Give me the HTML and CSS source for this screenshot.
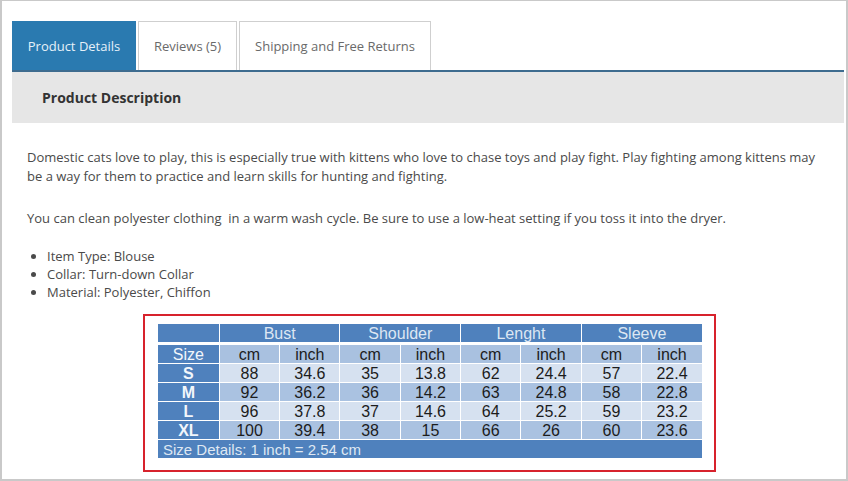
FILE: index.html
```html
<!DOCTYPE html>
<html>
<head>
<meta charset="utf-8">
<link rel="stylesheet" href="styles.css">
</head>
<body>
<div class="frame">
  <div class="tabs">
    <div class="tab active">Product Details</div>
    <div class="tab">Reviews (5)</div>
    <div class="tab">Shipping and Free Returns</div>
  </div>
  <div class="panel-head">Product Description</div>
  <div class="content">
    <p>Domestic cats love to play, this is especially true with kittens who love to chase toys and play fight. Play fighting among kittens may be a way for them to practice and learn skills for hunting and fighting.</p>
    <p class="p2">You can clean polyester clothing&nbsp; in a warm wash cycle. Be sure to use a low-heat setting if you toss it into the dryer.</p>
    <ul>
      <li>Item Type: Blouse</li>
      <li>Collar: Turn-down Collar</li>
      <li>Material: Polyester, Chiffon</li>
    </ul>
    <div class="chart-wrap">
      <div class="chart">
        <table class="size">
          <colgroup>
            <col class="c0"><col><col><col><col><col><col><col><col>
          </colgroup>
          <tr class="h1">
            <td></td><td colspan="2">Bust</td><td colspan="2">Shoulder</td><td colspan="2">Lenght</td><td colspan="2">Sleeve</td>
          </tr>
          <tr class="h2">
            <td class="lab">Size</td><td>cm</td><td>inch</td><td>cm</td><td>inch</td><td>cm</td><td>inch</td><td>cm</td><td>inch</td>
          </tr>
          <tr class="lt">
            <td class="lab b">S</td><td>88</td><td>34.6</td><td>35</td><td>13.8</td><td>62</td><td>24.4</td><td>57</td><td>22.4</td>
          </tr>
          <tr class="md">
            <td class="lab b">M</td><td>92</td><td>36.2</td><td>36</td><td>14.2</td><td>63</td><td>24.8</td><td>58</td><td>22.8</td>
          </tr>
          <tr class="lt">
            <td class="lab b">L</td><td>96</td><td>37.8</td><td>37</td><td>14.6</td><td>64</td><td>25.2</td><td>59</td><td>23.2</td>
          </tr>
          <tr class="md">
            <td class="lab b">XL</td><td>100</td><td>39.4</td><td>38</td><td>15</td><td>66</td><td>26</td><td>60</td><td>23.6</td>
          </tr>
          <tr class="foot">
            <td colspan="9">Size Details: 1 inch = 2.54 cm</td>
          </tr>
        </table>
      </div>
    </div>
  </div>
</div>
</body>
</html>
```

FILE: styles.css
```css
* { box-sizing: border-box; }
html, body { margin: 0; padding: 0; background: #fff; }
body { font-family: "Open Sans", "Liberation Sans", sans-serif; }

.frame {
  width: 848px;
  height: 481px;
  border: 2px solid #c9c9c9;
  border-top-width: 1px;
  padding: 20px 2px 0 10px;
  overflow: hidden;
}

.tabs {
  display: flex;
  gap: 2px;
  height: 51px;
  border-bottom: 2px solid #3e6c8f;
}
.tab {
  display: flex;
  align-items: center;
  justify-content: center;
  height: 49px;
  border: 1px solid #cfcfcf;
  border-bottom: none;
  background: #fff;
  color: #6a6a6a;
  font-size: 13px;
}
.tab:nth-child(2) { width: 99px; }
.tab:nth-child(3) { width: 192px; }
.tab.active {
  width: 124px;
  background: #2a7ab0;
  border-color: #2a7ab0;
  color: #e6f1f9;
}

.panel-head {
  height: 51px;
  background: #e6e6e6;
  padding-left: 30px;
  display: flex;
  align-items: center;
  font-weight: 700;
  font-size: 14px;
  color: #333;
}

.content {
  padding: 25px 15px 0 15px;
  color: #4a4a4a;
  font-size: 13px;
  line-height: 19px;
}
.content p { margin: 0; }
.content .p2 { margin-top: 23px; }
.content ul {
  margin: 19px 0 0 0;
  padding-left: 20px;
  line-height: 18px;
}

.chart-wrap {
  display: flex;
  justify-content: center;
  margin-top: 13px;
}
.chart {
  width: 573px;
  border: 2px solid #d7222c;
  padding: 8px 13px 11px 13px;
  margin-left: 3px;
}

table.size {
  width: 544px;
  table-layout: fixed;
  border-collapse: collapse;
  font-family: "Liberation Sans", Arial, sans-serif;
  font-size: 16px;
  color: #1c1c1c;
}
table.size col { width: 60px; }
table.size col.c0 { width: 61px; }
table.size td {
  box-sizing: content-box;
  padding: 0;
  text-align: center;
  border: 1px solid #fff;
  height: 18px;
  line-height: 17px;
}
table.size tr:first-child td { border-top: none; }
table.size td:first-child { border-left: none; }
table.size td:last-child { border-right: none; }

.h1 td {
  background: #4f81bd;
  color: #dde7f3;
  height: 20px;
  border-bottom: 3px solid #fff !important;
}
.h2 td { background: #a9c1e0; height: 19px; }
.lt td { background: #d6e1f0; }
.md td { background: #aac2e1; }
td.lab { background: #4f81bd !important; color: #f2f6fb; }
td.b { font-weight: 700; }
.foot td {
  background: #4f81bd;
  color: #dfe8f3;
  text-align: left !important;
  padding-left: 5px !important;
  font-size: 15px;
  height: 18px;
  border-bottom: none;
}
```
